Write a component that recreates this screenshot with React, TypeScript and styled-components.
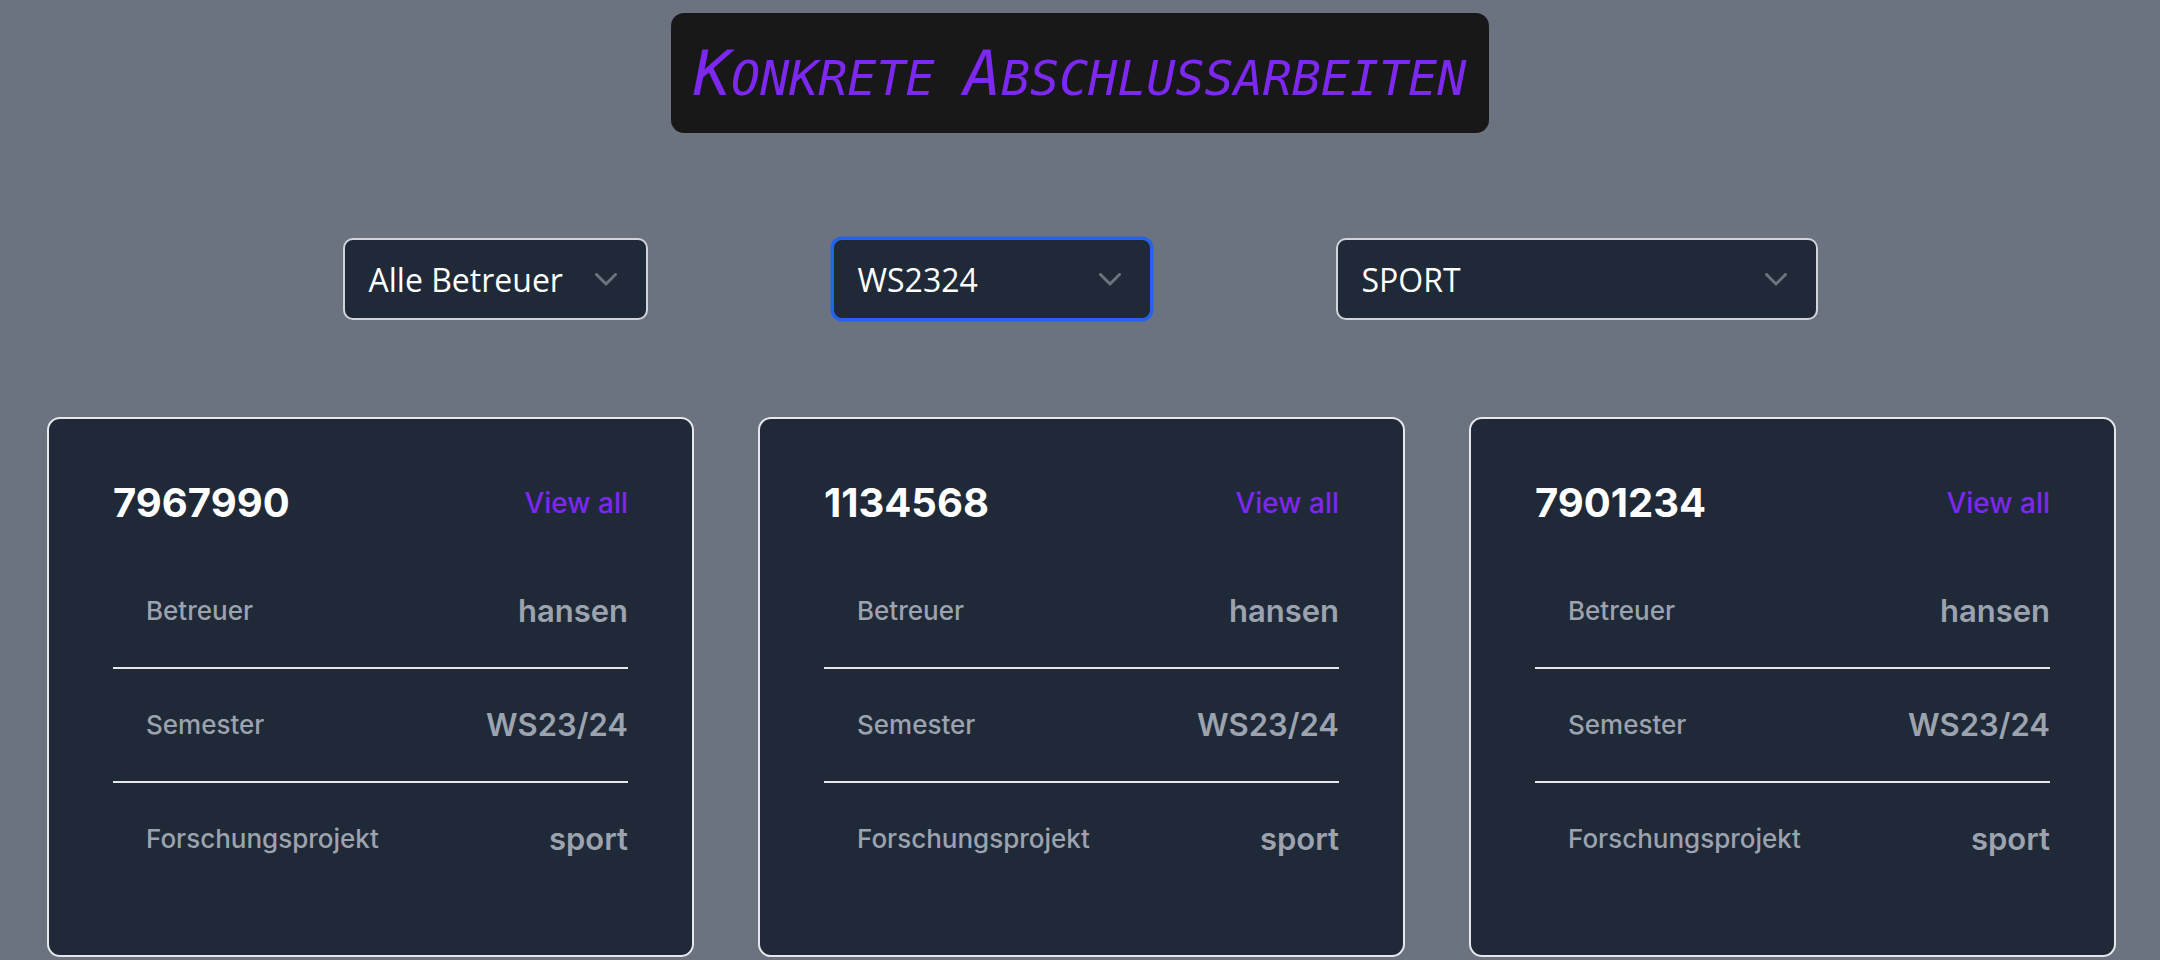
import React from "react";
import styled, { createGlobalStyle } from "styled-components";

const GlobalStyle = createGlobalStyle`
  html, body {
    margin: 0;
    padding: 0;
    background: #6b7280;
  }
  body {
    font-family: "Inter", "Liberation Sans", sans-serif;
  }
  * { box-sizing: border-box; }
`;

const Page = styled.div`
  min-height: 100vh;
  background: #6b7280;
  padding-top: 13px;
  display: flex;
  flex-direction: column;
  align-items: stretch;
`;

const TitleRow = styled.header`
  display: flex;
  justify-content: center;
`;

const TitleBox = styled.h1`
  margin: 0;
  background: #181818;
  border-radius: 13px;
  padding: 24px 23px 23px;
  font-family: "DejaVu Sans Mono", "Liberation Mono", monospace;
  font-style: italic;
  font-weight: 400;
  font-size: 62px;
  line-height: 73px;
  height: 120px;
  color: #7c28f0;
  white-space: nowrap;
`;

const BigLetter = styled.span`
  font-size: 62px;
  line-height: 73px;
`;

const SmallLetters = styled.span`
  font-size: 48.3px;
  line-height: 48px;
  text-transform: uppercase;
`;

const FilterRow = styled.div`
  margin-top: 105px;
  display: flex;
  justify-content: center;
  gap: 184px;
`;

const SelectBox = styled.div<{ $width: number; $focused?: boolean }>`
  width: ${(p) => p.$width}px;
  height: 82px;
  background: #1f2937;
  border: 2px solid ${(p) => (p.$focused ? "#2563eb" : "#d1d5db")};
  box-shadow: ${(p) => (p.$focused ? "0 0 0 1.5px #2563eb" : "none")};
  border-radius: 10px;
  display: flex;
  align-items: center;
  justify-content: space-between;
  padding: 0 29px 0 24px;
  font-family: "Open Sans", "Noto Sans", sans-serif;
  font-size: 32px;
  color: #ffffff;
  cursor: pointer;
`;

const SelectText = styled.span`
  white-space: nowrap;
`;

const Chevron = styled.svg`
  width: 22px;
  height: 13px;
  flex: none;
`;

const CardGrid = styled.div`
  margin-top: 97px;
  padding: 0 44px 0 47px;
  display: grid;
  grid-template-columns: repeat(3, 1fr);
  gap: 64px;
`;

const Card = styled.section`
  background: #1f2937;
  border: 2px solid #e5e7eb;
  border-radius: 13px;
  padding: 64px 64px 60px;
`;

const CardHeader = styled.div`
  display: flex;
  align-items: center;
  justify-content: space-between;
  margin-bottom: 32px;
`;

const CardNumber = styled.h5`
  margin: 0;
  font-size: 40px;
  line-height: 40px;
  font-weight: 700;
  color: #ffffff;
`;

const ViewAll = styled.a`
  font-size: 28px;
  line-height: 40px;
  font-weight: 500;
  color: #7c28f0;
  text-decoration: none;
  cursor: pointer;
`;

const List = styled.ul`
  list-style: none;
  margin: 0;
  padding: 0;
`;

const Row = styled.li<{ $last?: boolean }>`
  display: flex;
  align-items: center;
  padding: 32px 0;
  border-bottom: ${(p) => (p.$last ? "none" : "2px solid #e5e7eb")};
`;

const Label = styled.span`
  flex: 1;
  min-width: 0;
  margin-left: 33px;
  font-size: 26px;
  line-height: 48px;
  font-weight: 500;
  color: #9ca3af;
`;

const Value = styled.span`
  font-size: 31px;
  line-height: 48px;
  font-weight: 600;
  color: #9ca3af;
`;

const SmallCapsTitle: React.FC<{ text: string }> = ({ text }) => {
  const words = text.split(" ");
  return (
    <>
      {words.map((w, i) => (
        <React.Fragment key={i}>
          {i > 0 && <SmallLetters> </SmallLetters>}
          <BigLetter>{w.charAt(0)}</BigLetter>
          <SmallLetters>{w.slice(1)}</SmallLetters>
        </React.Fragment>
      ))}
    </>
  );
};

const Select: React.FC<{ label: string; width: number; focused?: boolean }> = ({
  label,
  width,
  focused,
}) => (
  <SelectBox $width={width} $focused={focused}>
    <SelectText>{label}</SelectText>
    <Chevron viewBox="0 0 22 13" fill="none">
      <path
        d="M1.5 1.5 L11 11 L20.5 1.5"
        stroke="#6b7280"
        strokeWidth="3"
        strokeLinecap="round"
        strokeLinejoin="round"
      />
    </Chevron>
  </SelectBox>
);

type Thesis = {
  id: string;
  betreuer: string;
  semester: string;
  projekt: string;
};

const theses: Thesis[] = [
  { id: "7967990", betreuer: "hansen", semester: "WS23/24", projekt: "sport" },
  { id: "1134568", betreuer: "hansen", semester: "WS23/24", projekt: "sport" },
  { id: "7901234", betreuer: "hansen", semester: "WS23/24", projekt: "sport" },
];

const ThesisCard: React.FC<{ t: Thesis }> = ({ t }) => (
  <Card>
    <CardHeader>
      <CardNumber>{t.id}</CardNumber>
      <ViewAll>View all</ViewAll>
    </CardHeader>
    <List>
      <Row>
        <Label>Betreuer</Label>
        <Value>{t.betreuer}</Value>
      </Row>
      <Row>
        <Label>Semester</Label>
        <Value>{t.semester}</Value>
      </Row>
      <Row $last>
        <Label>Forschungsprojekt</Label>
        <Value>{t.projekt}</Value>
      </Row>
    </List>
  </Card>
);

export default function App() {
  return (
    <>
      <GlobalStyle />
      <Page>
        <TitleRow>
          <TitleBox>
            <SmallCapsTitle text="Konkrete Abschlussarbeiten" />
          </TitleBox>
        </TitleRow>
        <FilterRow>
          <Select label="Alle Betreuer" width={305} />
          <Select label="WS2324" width={320} focused />
          <Select label="SPORT" width={482} />
        </FilterRow>
        <CardGrid>
          {theses.map((t) => (
            <ThesisCard key={t.id} t={t} />
          ))}
        </CardGrid>
      </Page>
    </>
  );
}
